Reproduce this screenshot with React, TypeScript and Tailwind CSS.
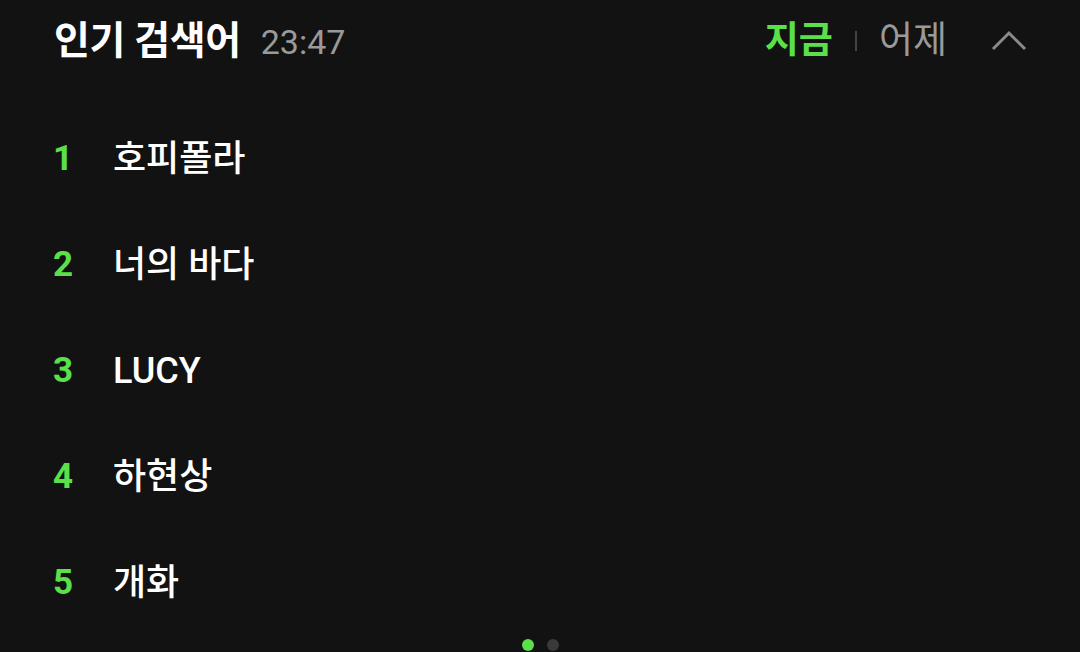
const items = ["호피폴라", "너의 바다", "LUCY", "하현상", "개화"];

export default function App() {
  return (
    <div className="h-[652px] w-full overflow-hidden bg-[#121212] font-['Roboto','Noto_Sans_CJK_KR',sans-serif]">
      <header className="flex h-[82px] items-center justify-between pl-[54px] pr-[53px]">
        <div className="flex items-baseline gap-[20px]">
          <h1 className="text-[39px] font-bold tracking-[-0.4px] text-white">인기 검색어</h1>
          <span className="text-[34px] text-[#9a9a9a]">23:47</span>
        </div>
        <div className="flex items-center">
          <span className="text-[37px] font-bold text-[#5be04b]">지금</span>
          <span className="mx-[22px] h-[20px] w-[2px] bg-[#444]" />
          <span className="text-[37px] text-[#9a9a9a]">어제</span>
          <svg width="36" height="22" viewBox="0 0 36 22" className="ml-[44px]" fill="none">
            <polyline points="2,19 18,3 34,19" stroke="#8a8a8a" strokeWidth="3" />
          </svg>
        </div>
      </header>

      <ol className="mt-[24px]">
        {items.map((name, i) => (
          <li key={name} className="flex h-[106px] items-center pl-[53px]">
            <span className="w-[60px] text-[35px] font-bold text-[#5be04b]">{i + 1}</span>
            <span className="text-[36px] font-medium text-white">{name}</span>
          </li>
        ))}
      </ol>

      <div className="mt-[3px] flex justify-center gap-[13px]">
        <span className="h-[12px] w-[12px] rounded-full bg-[#5be04b]" />
        <span className="h-[12px] w-[12px] rounded-full bg-[#3a3a3a]" />
      </div>
    </div>
  );
}
